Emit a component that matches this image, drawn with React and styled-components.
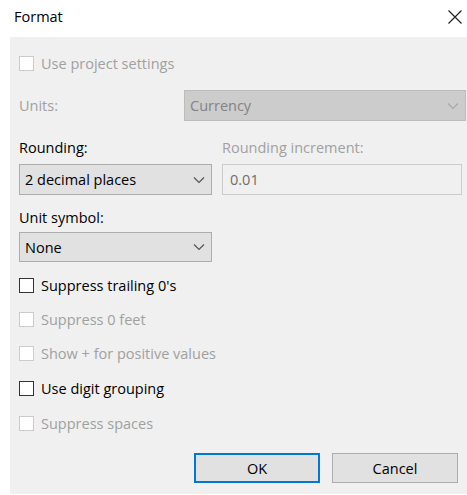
import styled, { createGlobalStyle } from 'styled-components';

const Global = createGlobalStyle`
  html, body {
    margin: 0;
    padding: 0;
    background: #ffffff;
  }
  body {
    font-family: 'Open Sans', 'Noto Sans', sans-serif;
    font-size: 14.5px;
    color: #000;
  }
`;

const Dialog = styled.div`
  width: 467px;
  height: 495px;
  display: flex;
  flex-direction: column;
  background: #fff;
`;

const TitleBar = styled.div`
  height: 37px;
  display: flex;
  align-items: center;
  justify-content: space-between;
  padding: 0 2px 4px 14px;
  box-sizing: border-box;
  font-size: 14.5px;
`;

const CloseButton = styled.button`
  border: none;
  background: none;
  padding: 0;
  width: 20px;
  height: 20px;
  display: flex;
  align-items: center;
  justify-content: center;
`;

const Panel = styled.div`
  margin-left: 10px;
  height: 457px;
  background: #f0f0f0;
  padding: 17px 0 0 9px;
  box-sizing: border-box;
  display: flex;
  flex-direction: column;
`;

const CheckRow = styled.label`
  display: flex;
  align-items: center;
  gap: 7px;
  height: 18px;
  margin-bottom: ${p => p.$gap ?? 16}px;
  color: ${p => (p.$disabled ? '#a0a0a0' : '#000')};
`;

const Box = styled.span`
  width: 15px;
  height: 15px;
  box-sizing: border-box;
  border: 1px solid ${p => (p.$disabled ? '#cccccc' : '#333333')};
  background: #fff;
  flex: none;
`;

const Grid = styled.div`
  display: grid;
  grid-template-columns: ${p => p.$cols || '193px 250px'};
  column-gap: 10px;
  align-items: center;
  margin-top: ${p => p.$top || 0}px;
`;

const Label = styled.div`
  color: ${p => (p.$disabled ? '#a0a0a0' : '#000')};
  height: 20px;
  line-height: 20px;
  margin-top: ${p => p.$top || 0}px;
`;

const Combo = styled.div`
  height: ${p => p.$height || 31}px;
  width: ${p => (p.$width ? `${p.$width}px` : 'auto')};
  margin-top: ${p => p.$top || 0}px;
  box-sizing: border-box;
  display: flex;
  align-items: center;
  justify-content: space-between;
  padding: 0 6px 0 5px;
  border: 1px solid ${p => (p.$disabled ? '#bcbcbc' : '#adadad')};
  background: ${p => (p.$disabled ? '#cccccc' : '#e1e1e1')};
  color: ${p => (p.$disabled ? '#838383' : '#000')};
`;

const TextField = styled.div`
  height: 31px;
  width: 240px;
  box-sizing: border-box;
  display: flex;
  align-items: center;
  padding: 0 7px;
  border: 1px solid #cccccc;
  background: #f0f0f0;
  color: #6d6d6d;
`;

const Spacer = styled.div`
  height: ${p => p.$h}px;
  flex: none;
`;

const ButtonRow = styled.div`
  display: flex;
  gap: 12px;
  margin: auto 9px 11px auto;
`;

const Button = styled.button`
  width: 126px;
  height: 30px;
  box-sizing: border-box;
  font-family: inherit;
  font-size: 14.5px;
  color: #000;
  background: #e1e1e1;
  border: ${p => (p.$primary ? '2px solid #0078d7' : '1px solid #adadad')};
  padding: 0;
`;

const Chevron = ({ color }) => (
  <svg width="12" height="8" viewBox="0 0 12 8">
    <path d="M1 1.5 L6 6.5 L11 1.5" fill="none" stroke={color} strokeWidth="1.2" />
  </svg>
);

const Check = ({ label, disabled, gap }) => (
  <CheckRow $disabled={disabled} $gap={gap}>
    <Box $disabled={disabled} />
    {label}
  </CheckRow>
);

export default function App() {
  return (
    <>
      <Global />
      <Dialog>
        <TitleBar>
          <span>Format</span>
          <CloseButton>
            <svg width="16" height="16" viewBox="0 0 16 16">
              <path d="M1.5 1.5 L14.5 14.5 M14.5 1.5 L1.5 14.5" stroke="#222" strokeWidth="1.2" />
            </svg>
          </CloseButton>
        </TitleBar>
        <Panel>
          <Check label="Use project settings" disabled gap={18} />
          <Grid $cols="155px 282px">
            <Label $disabled>Units:</Label>
            <Combo $disabled>
              Currency
              <Chevron color="#a8a8a8" />
            </Combo>
          </Grid>
          <Grid $top={17}>
            <Label>Rounding:</Label>
            <Label $disabled>Rounding increment:</Label>
          </Grid>
          <Grid $top={6}>
            <Combo>
              2 decimal places
              <Chevron color="#555" />
            </Combo>
            <TextField>0.01</TextField>
          </Grid>
          <Label $top={13}>Unit symbol:</Label>
          <Combo $width={193} $top={4} $height={30}>
            None
            <Chevron color="#555" />
          </Combo>
          <Spacer $h={14} />
          <Check label="Suppress trailing 0's" />
          <Check label="Suppress 0 feet" disabled />
          <Check label="Show + for positive values" disabled gap={17} />
          <Check label="Use digit grouping" gap={17} />
          <Check label="Suppress spaces" disabled gap={0} />
          <ButtonRow>
            <Button $primary>OK</Button>
            <Button>Cancel</Button>
          </ButtonRow>
        </Panel>
      </Dialog>
    </>
  );
}
